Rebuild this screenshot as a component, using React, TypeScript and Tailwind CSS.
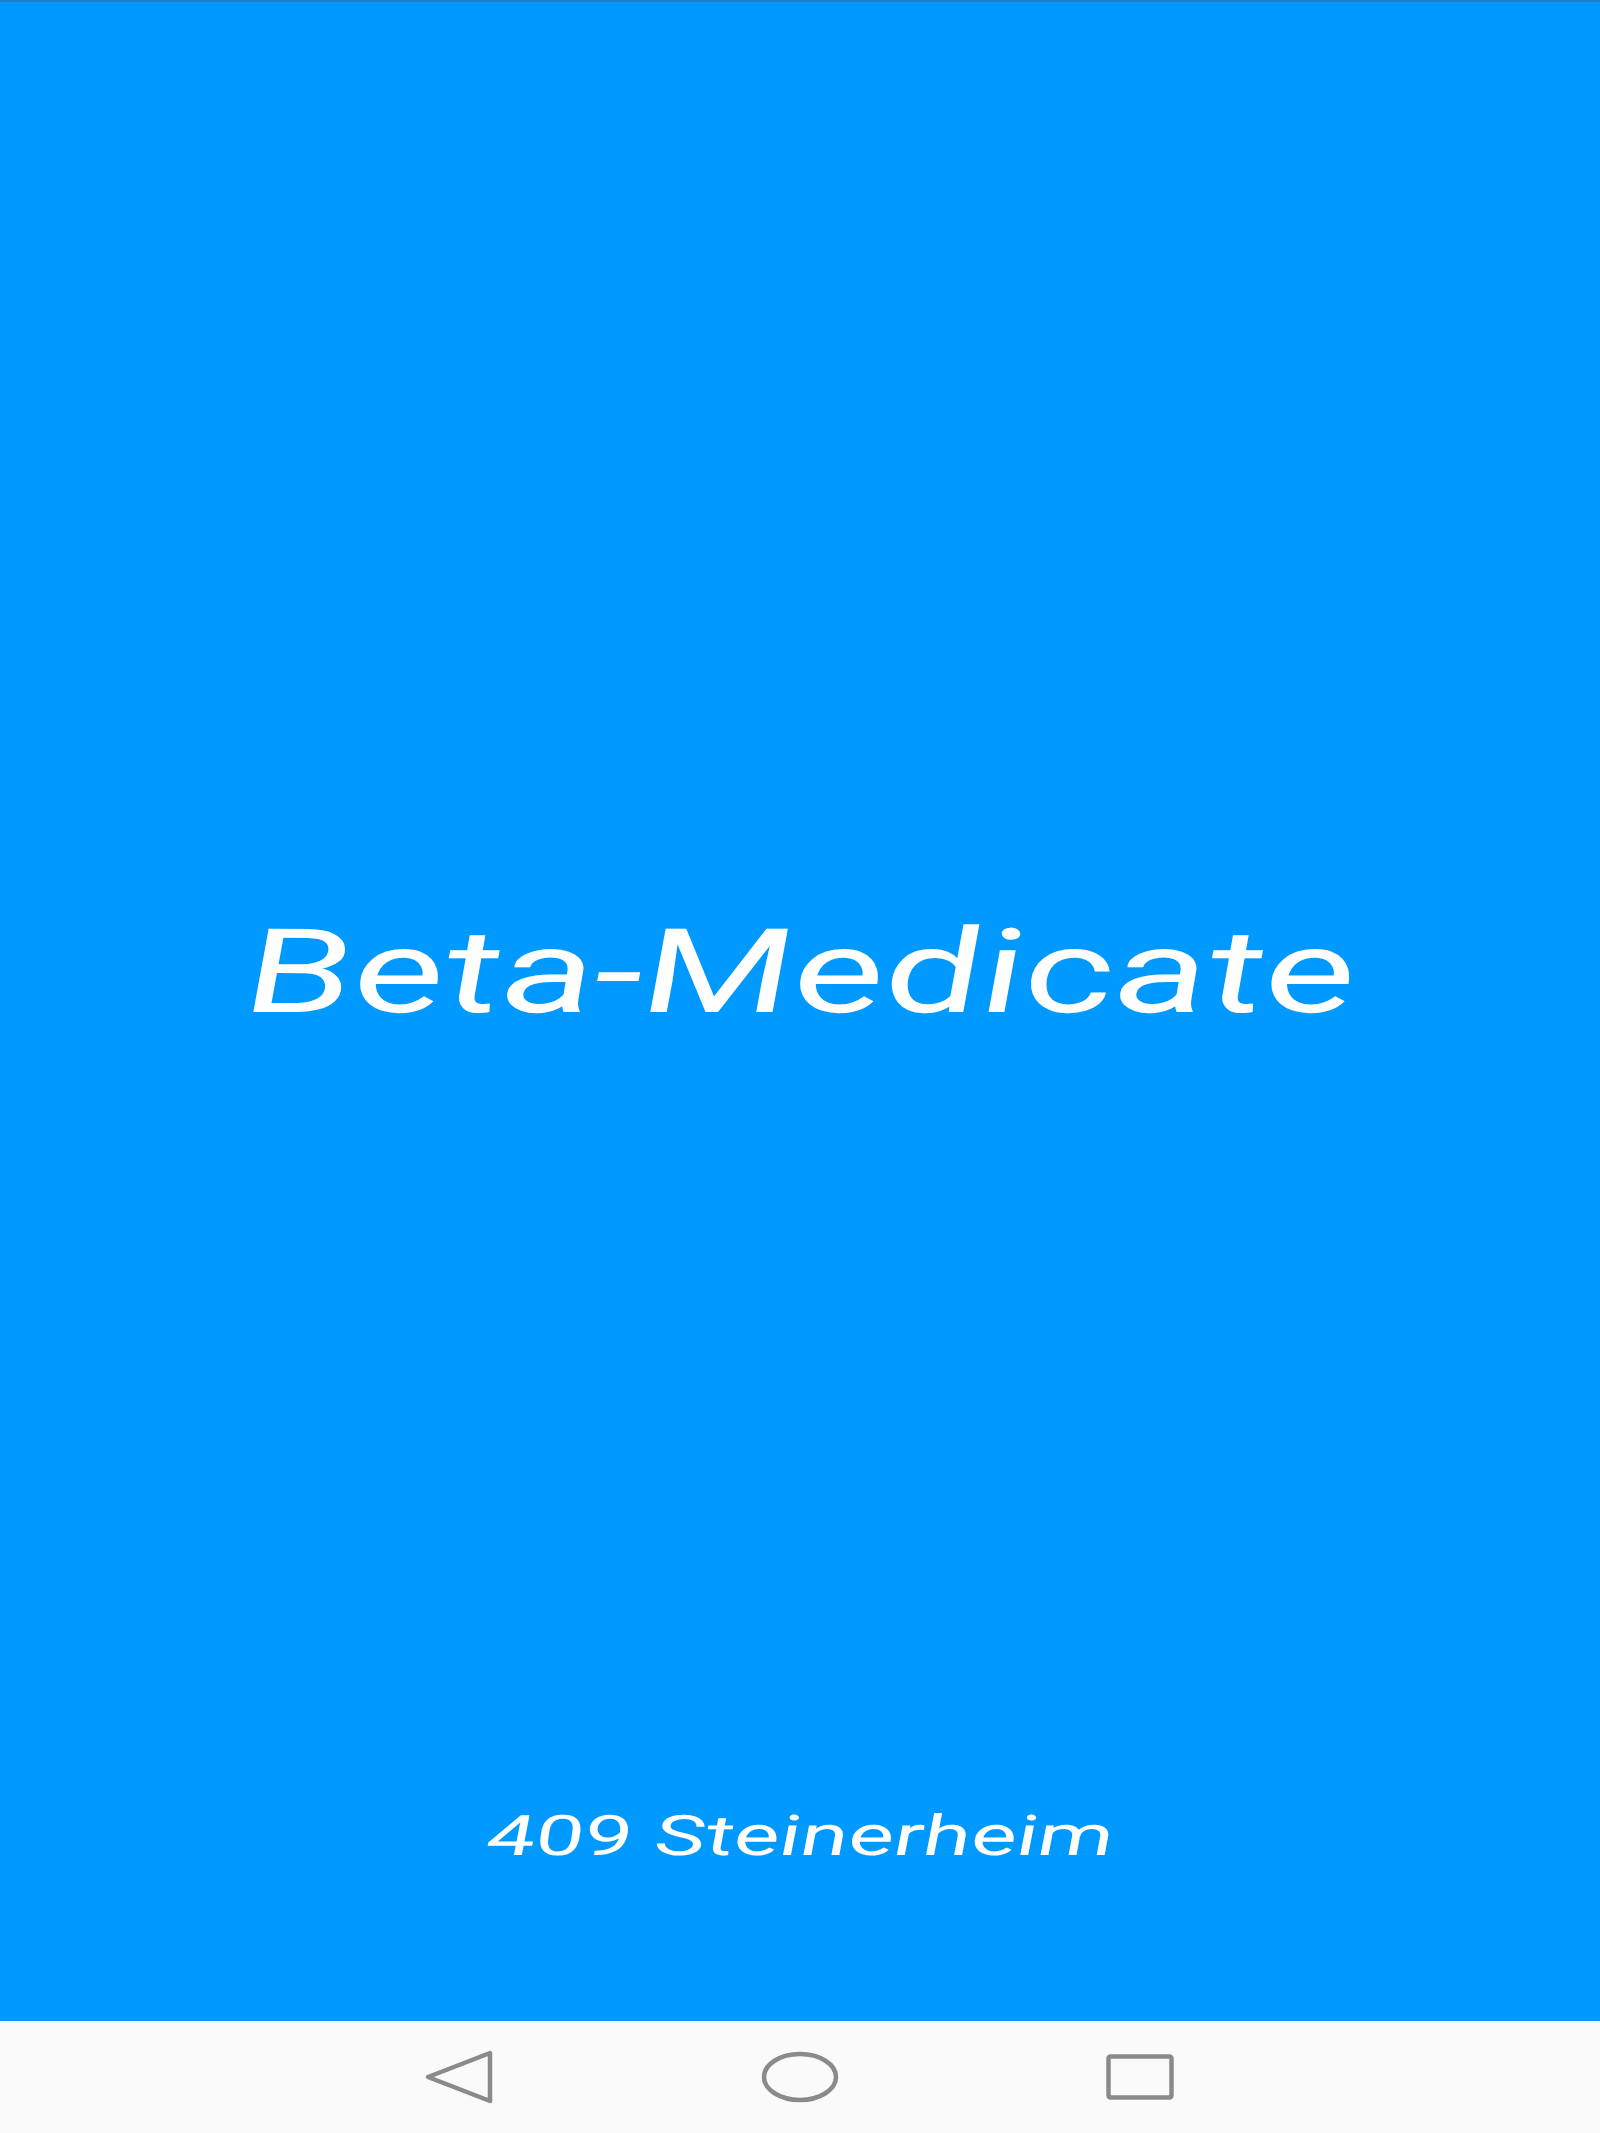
export default function App() {
  return (
    <div className="w-[1600px] h-[2133px] flex flex-col overflow-hidden" style={{ fontFamily: 'Roboto, "Liberation Sans", sans-serif' }}>
      <div className="h-[2021px] bg-[#0099ff] border-t-2 border-[#1a7fc8] flex flex-col items-center">
        <h1 className="mt-[912px] text-[117px] leading-none italic text-white scale-x-[1.52] skew-x-[3deg] whitespace-nowrap font-normal">
          Beta-Medicate
        </h1>
        <p className="mt-[777px] text-[56px] leading-none italic text-white scale-x-[1.59] skew-x-[3deg] whitespace-nowrap">
          409 Steinerheim
        </p>
      </div>
      <div className="h-[112px] bg-[#fafafa] flex justify-center items-center">
        <div className="w-[340px] flex justify-center">
          <svg width="72" height="56" viewBox="0 0 72 56" fill="none" stroke="#8a8a8a" strokeWidth="4.5" strokeLinejoin="round">
            <path d="M4 28 L66 4 L66 52 Z" />
          </svg>
        </div>
        <div className="w-[340px] flex justify-center">
          <svg width="78" height="52" viewBox="0 0 78 52" fill="none" stroke="#8a8a8a" strokeWidth="4.5">
            <ellipse cx="39" cy="26" rx="36" ry="23" />
          </svg>
        </div>
        <div className="w-[340px] flex justify-center">
          <svg width="68" height="46" viewBox="0 0 68 46" fill="none" stroke="#8a8a8a" strokeWidth="4.5" strokeLinejoin="round">
            <rect x="2.5" y="2.5" width="63" height="41" rx="2" />
          </svg>
        </div>
      </div>
    </div>
  );
}
